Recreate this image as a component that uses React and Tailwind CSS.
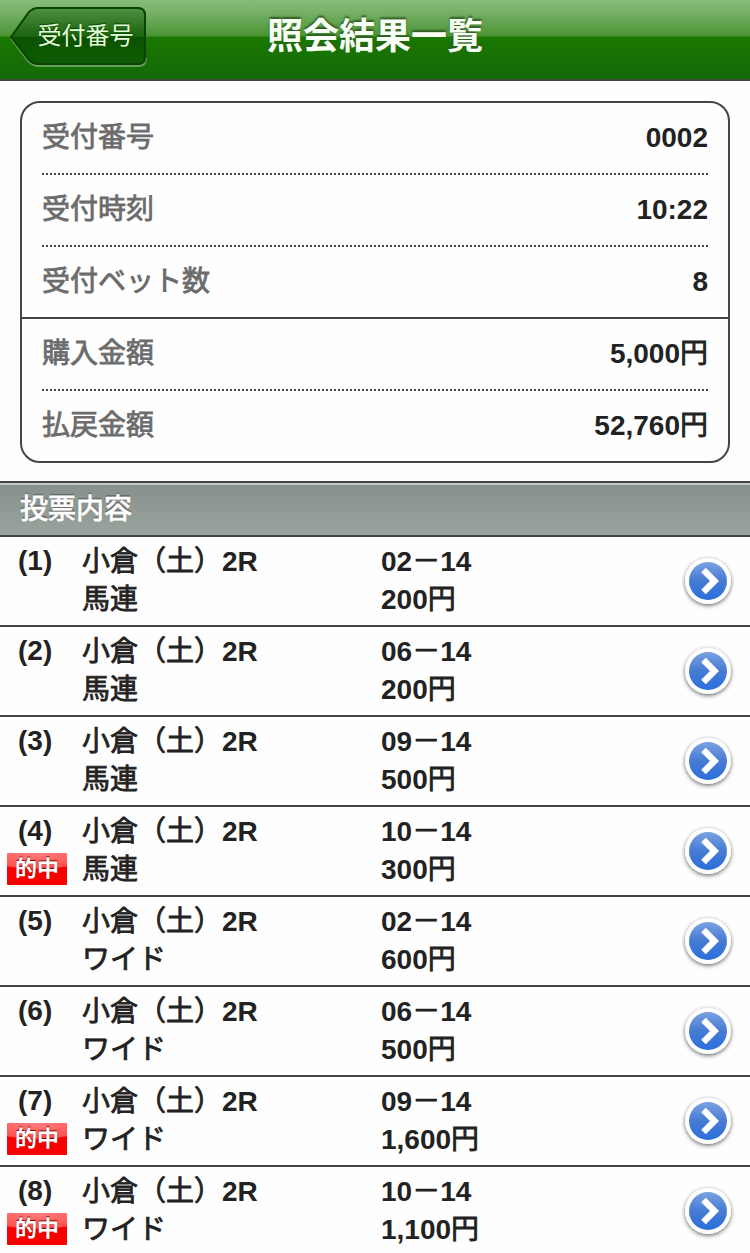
const SUMMARY = [
  { label: "受付番号", value: "0002", line: "dotted" },
  { label: "受付時刻", value: "10:22", line: "dotted" },
  { label: "受付ベット数", value: "8", line: "solid" },
  { label: "購入金額", value: "5,000", unit: "円", line: "dotted" },
  { label: "払戻金額", value: "52,760", unit: "円", line: "none" },
];

const BETS = [
  { id: 1, type: "馬連", from: "02", to: "14", amount: "200", hit: false },
  { id: 2, type: "馬連", from: "06", to: "14", amount: "200", hit: false },
  { id: 3, type: "馬連", from: "09", to: "14", amount: "500", hit: false },
  { id: 4, type: "馬連", from: "10", to: "14", amount: "300", hit: true },
  { id: 5, type: "ワイド", from: "02", to: "14", amount: "600", hit: false },
  { id: 6, type: "ワイド", from: "06", to: "14", amount: "500", hit: false },
  { id: 7, type: "ワイド", from: "09", to: "14", amount: "1,600", hit: true },
  { id: 8, type: "ワイド", from: "10", to: "14", amount: "1,100", hit: true },
];

// Japanese text sits between regular and bold, so the regular face gets a thin stroke
const Ja = ({ children }) => <span className="font-normal [-webkit-text-stroke:0.8px_currentColor]">{children}</span>;

const Header = () => (
  <header className="relative flex h-[81px] items-start justify-center border-b-2 border-[#3d4a3a] bg-[linear-gradient(to_bottom,#86bc7a_0px,#7ab36b_10px,#4a9434_36px,#1a7800_37px,#176f05_60px,#136a08_79px)]">
    <button className="absolute left-[9px] top-[6px] h-[62px] w-[139px]">
      <svg viewBox="0 0 139 62" className="absolute inset-0 h-full w-full">
        <defs>
          <linearGradient id="back" x1="0" y1="0" x2="0" y2="1">
            <stop offset="0" stopColor="#4f9142" />
            <stop offset="0.5" stopColor="#1c640d" />
            <stop offset="0.53" stopColor="#0b5200" />
            <stop offset="1" stopColor="#0d5c02" />
          </linearGradient>
        </defs>
        <path d="M2 32.5 L20 56 Q25 60 30 60 H129 Q137 60 137 52" fill="none" stroke="#66a35a" strokeWidth="2" />
        <path d="M2 31 L20 6 Q24 2 29 2 H129 Q136 2 136 9 V51 Q136 58 129 58 H29 Q24 58 20 54 Z" fill="url(#back)" stroke="#0a4300" strokeWidth="2" />
      </svg>
      <span className="relative -top-[2px] left-[7px] text-2xl font-normal text-[#e3ffd9] [text-shadow:0_-1px_1px_#0a4300]">受付番号</span>
    </button>
    <h1 className="text-[36px] font-bold leading-[74px] text-[#f8fff4] [text-shadow:0_-2px_2px_#2d5b24]">照会結果一覧</h1>
  </header>
);

const SummaryRow = ({ row }) => (
  <>
    <div className="flex h-[70px] items-center justify-between px-5">
      <span className="text-[#6b6b6b]"><Ja>{row.label}</Ja></span>
      <span className="text-[#222]">{row.value}{row.unit && <Ja>{row.unit}</Ja>}</span>
    </div>
    {row.line === "dotted" && <div className="mx-5 h-[2px] bg-[repeating-linear-gradient(to_right,#444_0px,#444_2px,transparent_2px,transparent_4px)]" />}
    {row.line === "solid" && <div className="h-[2px] bg-[#444645]" />}
  </>
);

const ArrowIcon = () => (
  <svg viewBox="0 0 60 60" className="h-[60px] w-[60px]">
    <defs>
      <linearGradient id="ball" x1="0" y1="0" x2="0" y2="1">
        <stop offset="0" stopColor="#7ba2e2" />
        <stop offset="0.5" stopColor="#467bd3" />
        <stop offset="1" stopColor="#2a6fdc" />
      </linearGradient>
      <filter id="drop" x="-20%" y="-20%" width="140%" height="140%">
        <feDropShadow dx="0" dy="1.5" stdDeviation="2" floodColor="#000" floodOpacity="0.6" />
      </filter>
    </defs>
    <circle cx="30" cy="30" r="23" fill="#fff" filter="url(#drop)" />
    <circle cx="30" cy="30" r="19" fill="url(#ball)" />
    <path d="M25.500 19 L36.500 30 L25.500 41" fill="none" stroke="#fff" strokeWidth="6.400" />
  </svg>
);

const BetRow = ({ bet }) => (
  <li className="flex h-[90px] border-b-2 border-[#444645] pt-[6px] leading-[38px]">
    <div className="-mt-px flex w-[82px] flex-col">
      <span className="pl-[18px]">({bet.id})</span>
      {bet.hit && (
        <span className="ml-[7px] mt-[3px] h-8 w-[60px] rounded-[1px] bg-[radial-gradient(ellipse_60px_16px_at_50%_0%,#ff8080_0%,#ff5050_94%,#f60000_100%)] text-center text-[22px] leading-8 text-white [text-shadow:0_-1px_1px_#7a0000]">的中</span>
      )}
    </div>
    <div className="w-[299px]">
      <p><Ja>小倉（土）</Ja>2R</p>
      <p><Ja>{bet.type}</Ja></p>
    </div>
    <div className="flex-1">
      <p>{bet.from}<Ja>－</Ja>{bet.to}</p>
      <p>{bet.amount}<Ja>円</Ja></p>
    </div>
    <button className="mr-3 mt-2 h-[60px] w-[60px]"><ArrowIcon /></button>
  </li>
);

export default function App() {
  return (
    <div className="h-[1253px] w-[750px] overflow-hidden bg-[#fefefe] font-['Liberation_Sans','Noto_Sans_CJK_JP',sans-serif] text-[28px] font-bold leading-[38px] text-[#222]" lang="ja">
      <Header />
      <section className="mx-5 mt-5 rounded-[20px] border-2 border-[#444645]">
        {SUMMARY.map((row) => <SummaryRow key={row.label} row={row} />)}
      </section>
      <h2 className="mt-[18px] h-14 border-y-2 border-[#444645] bg-[linear-gradient(to_bottom,#c4c8c5_0px,#c4c8c5_2px,#87908a_2px,#9aa49e_52px)] pl-5 leading-[54px] text-white [text-shadow:0_-2px_1px_#666]"><Ja>投票内容</Ja></h2>
      <ul>
        {BETS.map((bet) => <BetRow key={bet.id} bet={bet} />)}
      </ul>
    </div>
  );
}
